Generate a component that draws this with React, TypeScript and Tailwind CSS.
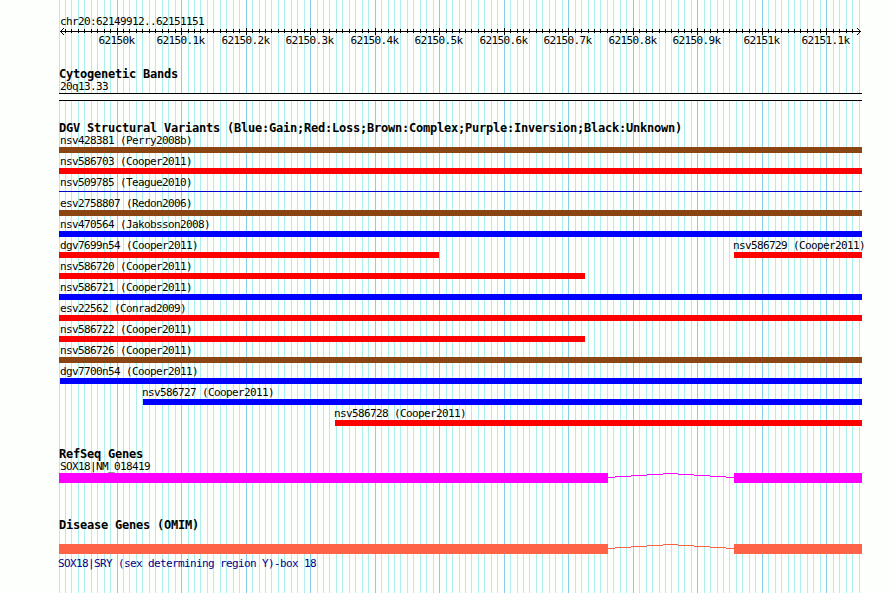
const START = 59;
const WIDTH = 803;

const LINES = Array.from({ length: 125 }, (_, n) => n - 9);
const lineX = (n: number) => Math.floor(117.08 + n * 6.4516);

const TICKS = ["62150k", "62150.1k", "62150.2k", "62150.3k", "62150.4k", "62150.5k", "62150.6k", "62150.7k", "62150.8k", "62150.9k", "62151k", "62151.1k"];

type Variant = { name: string; from: number; to: number; color: string };

const BROWN = "bg-[#8b4513]";
const RED = "bg-[#ff0000]";
const BLUE = "bg-[#0000ff]";

const ROWS: Variant[][] = [
  [{ name: "nsv428381 (Perry2008b)", from: 59, to: 862, color: BROWN }],
  [{ name: "nsv586703 (Cooper2011)", from: 59, to: 862, color: RED }],
  [{ name: "nsv509785 (Teague2010)", from: 59, to: 862, color: "line" }],
  [{ name: "esv2758807 (Redon2006)", from: 59, to: 862, color: BROWN }],
  [{ name: "nsv470564 (Jakobsson2008)", from: 59, to: 862, color: BLUE }],
  [
    { name: "dgv7699n54 (Cooper2011)", from: 59, to: 439, color: RED },
    { name: "nsv586729 (Cooper2011)", from: 734, to: 862, color: RED },
  ],
  [{ name: "nsv586720 (Cooper2011)", from: 59, to: 585, color: RED }],
  [{ name: "nsv586721 (Cooper2011)", from: 59, to: 862, color: BLUE }],
  [{ name: "esv22562 (Conrad2009)", from: 59, to: 862, color: RED }],
  [{ name: "nsv586722 (Cooper2011)", from: 59, to: 585, color: RED }],
  [{ name: "nsv586726 (Cooper2011)", from: 59, to: 862, color: BROWN }],
  [{ name: "dgv7700n54 (Cooper2011)", from: 60, to: 862, color: BLUE }],
  [{ name: "nsv586727 (Cooper2011)", from: 143, to: 862, color: BLUE }],
  [{ name: "nsv586728 (Cooper2011)", from: 335, to: 862, color: RED }],
];

function Grid() {
  return (
    <svg className="absolute inset-0" width="890" height="593" shapeRendering="crispEdges">
      {LINES.filter((n) => lineX(n) <= 861).map((n) => (
        <rect key={n} x={lineX(n)} y="0" width="1" height="593" fill={n % 10 === 0 ? "#87ceeb" : "#afeeee"} />
      ))}
    </svg>
  );
}

function Ruler() {
  return (
    <svg className="block" width="803" height="9" viewBox="59 27 803 9" shapeRendering="crispEdges">
      <rect x="60" y="31" width="801" height="1" />
      {LINES.filter((n) => n > -9 && lineX(n) < 857).map((n) =>
        n % 10 === 0 ? (
          <rect key={n} x={lineX(n)} y="28" width="1" height="7" />
        ) : (
          <rect key={n} x={lineX(n)} y="29" width="1" height="4" />
        )
      )}
      {[1, 2, 3].map((d) => (
        <g key={d}>
          <rect x={60 + d} y={31 - d} width="1" height="1" />
          <rect x={60 + d} y={31 + d} width="1" height="1" />
          <rect x={860 - d} y={31 - d} width="1" height="1" />
          <rect x={860 - d} y={31 + d} width="1" height="1" />
        </g>
      ))}
    </svg>
  );
}

function Title({ children }: { children: string }) {
  return <h2 className="h-3 text-[12px] leading-3 font-bold tracking-[-0.224px]">{children}</h2>;
}

function VariantRow({ items }: { items: Variant[] }) {
  return (
    <div className="flex h-[21px]">
      {items.map((v, i) => (
        <div
          key={v.name}
          style={{ width: v.to - v.from, marginLeft: v.from - (i === 0 ? START : items[i - 1].to) }}
        >
          <p className={v.from === START ? "h-[13px] pt-px pl-px" : v.from > 60 ? "h-[13px] pt-px -indent-px" : "h-[13px] pt-px"}>
            {v.name}
          </p>
          {v.color === "line" ? <div className="mt-0.5 h-px bg-[#0000cd]" /> : <div className={`h-1.5 ${v.color}`} />}
        </div>
      ))}
    </div>
  );
}

function Gene({ color }: { color: string }) {
  // the intron rises one pixel at a time up to its middle
  const steps = [[608, 4], [615, 3], [631, 2], [647, 1], [663, 0], [678, 1], [694, 2], [710, 3], [726, 4], [734, 4]];
  return (
    <svg className="block" width="803" height="10" viewBox="59 0 803 10" shapeRendering="crispEdges" fill={color}>
      <rect x="59" y="0" width="549" height="10" />
      {steps.slice(0, -1).map(([x, y], i) => (
        <rect key={x} x={x} y={y} width={steps[i + 1][0] - x} height="1" />
      ))}
      <rect x="734" y="0" width="128" height="10" />
    </svg>
  );
}

export default function App() {
  return (
    <div className="relative h-[593px] w-[890px] overflow-hidden bg-[#fdfffd] font-['DejaVu_Sans_Mono',monospace] text-[11px] leading-3 tracking-[-0.622px] whitespace-nowrap text-black">
      <Grid />
      <main className="relative ml-[59px] pt-[15px]" style={{ width: WIDTH }}>
        <p className="h-3 pt-px pl-px">chr20:62149912..62151151</p>
        <Ruler />
        <div className="flex h-[33px] -mt-px">
          {TICKS.map((t, i) => (
            <div
              key={t}
              className="flex w-0 shrink-0 justify-center"
              style={{ marginLeft: i === 0 ? 57.5 : lineX(i * 10) - lineX(i * 10 - 10) }}
            >
              <span>{t}</span>
            </div>
          ))}
        </div>

        <Title>Cytogenetic Bands</Title>
        <p className="h-[13px] pt-px pl-px">20q13.33</p>
        <div className="h-2 border-y border-black bg-[#fdfffd]" />

        <div className="mt-[21px]">
          <Title>DGV Structural Variants (Blue:Gain;Red:Loss;Brown:Complex;Purple:Inversion;Black:Unknown)</Title>
        </div>
        {ROWS.map((items) => (
          <VariantRow key={items[0].name} items={items} />
        ))}

        <div className="mt-5">
          <Title>RefSeq Genes</Title>
        </div>
        <p className="h-[13px] pt-px pl-px">SOX18|NM_018419</p>
        <Gene color="#ff00ff" />

        <div className="mt-9 mb-[13px]">
          <Title>Disease Genes (OMIM)</Title>
        </div>
        <Gene color="#ff6347" />
        <p className="-ml-px mt-1 text-[#00008b]">SOX18|SRY (sex determining region Y)-box 18</p>
      </main>
    </div>
  );
}
